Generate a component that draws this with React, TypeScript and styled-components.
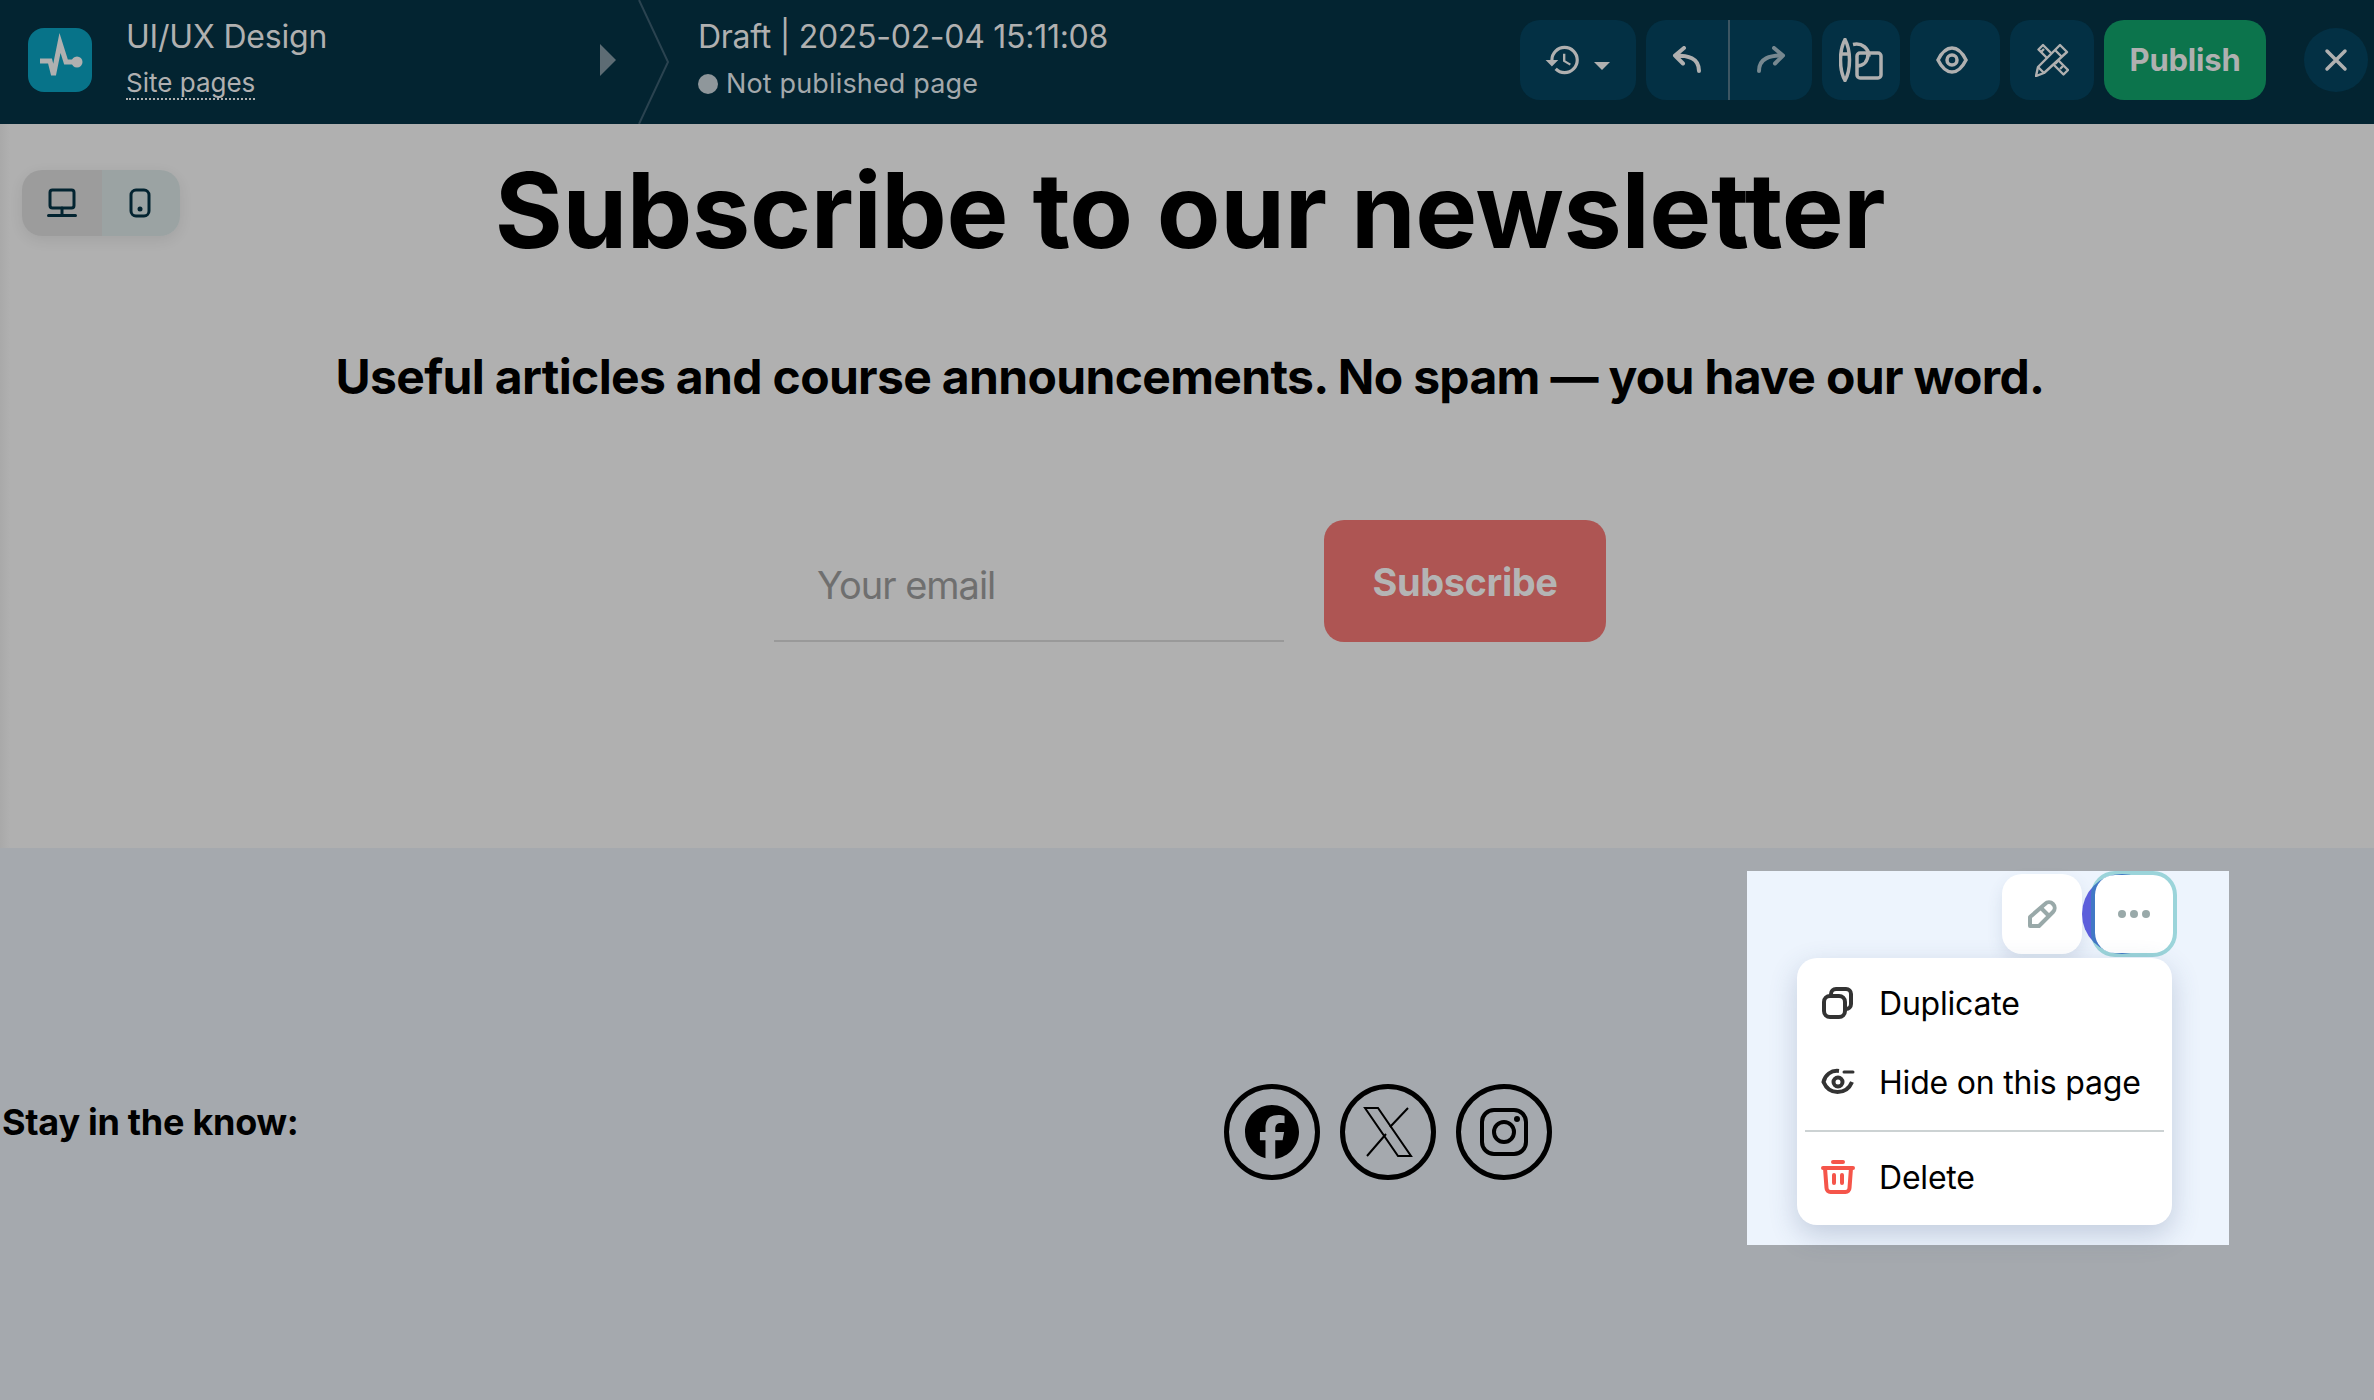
import React from 'react';
import styled, { createGlobalStyle } from 'styled-components';
import { FaFacebook } from 'react-icons/fa6';

const GlobalStyle = createGlobalStyle`
  html, body {
    margin: 0;
    padding: 0;
    background: #a5a9ae;
    font-family: Inter, "Liberation Sans", sans-serif;
  }
  * { box-sizing: border-box; }
`;

const Page = styled.div`
  position: relative;
  width: 2374px;
  height: 1400px;
  overflow: hidden;
  display: flex;
  flex-direction: column;
`;

const TopBar = styled.header`
  height: 124px;
  flex: none;
  padding-bottom: 4px;
  background: #032431;
  display: flex;
  align-items: center;
  color: #b0b0b0;
`;

const SiteBlock = styled.div`
  width: 600px;
  padding-left: 28px;
  display: flex;
  align-items: center;
  gap: 34px;
`;

const LogoBox = styled.div`
  width: 64px;
  height: 64px;
  border-radius: 16px;
  background: #077389;
  display: flex;
`;

const SiteText = styled.div`
  margin-top: -3px;
  display: flex;
  flex-direction: column;
  gap: 11px;
`;

const SiteTitle = styled.div`
  font-size: 32px;
  line-height: 38px;
  letter-spacing: -0.2px;
`;

const SiteLink = styled.span`
  align-self: flex-start;
  font-size: 26px;
  line-height: 31px;
  border-bottom: 2px dotted #b0b0b0;
`;

const Caret = styled.svg`
  width: 18px;
  height: 32px;
  flex: none;
`;

const Chevron = styled.svg`
  width: 32px;
  height: 124px;
  flex: none;
  align-self: flex-start;
  margin-left: 20px;
`;

const DraftBlock = styled.div`
  flex: 1;
  margin: -3px 0 0 28px;
  display: flex;
  flex-direction: column;
  gap: 12px;
`;

const DraftTitle = styled.div`
  font-size: 32px;
  line-height: 38px;
  letter-spacing: -0.28px;
`;

const DraftStatus = styled.div`
  display: flex;
  align-items: center;
  gap: 8px;
  font-size: 27px;
  line-height: 32px;
  letter-spacing: 0.15px;
  color: #a3a9ac;
`;

const StatusDot = styled.span`
  width: 20px;
  height: 20px;
  border-radius: 50%;
  background: #8f979b;
`;

const Tools = styled.div`
  display: flex;
  align-items: center;
  gap: 10px;
`;

const ToolButton = styled.div<{ $w: number; $pr?: number }>`
  width: ${p => p.$w}px;
  height: 80px;
  padding-right: ${p => p.$pr ?? 0}px;
  border-radius: 20px;
  background: #033044;
  display: flex;
  align-items: center;
  justify-content: center;
`;

const HistoryCaret = styled.svg`
  width: 16px;
  height: 8px;
  margin: 12px 0 0 12px;
`;

const UndoGroup = styled.div`
  width: 166px;
  height: 80px;
  border-radius: 20px;
  background: #033044;
  display: flex;
`;

const UndoCell = styled.div<{ $split?: boolean }>`
  flex: 1;
  display: flex;
  align-items: center;
  justify-content: center;
  border-right: ${p => (p.$split ? '2px solid #3c5663' : 'none')};
`;

const Publish = styled.div`
  width: 162px;
  height: 80px;
  padding-bottom: 2px;
  border-radius: 20px;
  background: #0c744c;
  color: #b0b0b0;
  font-size: 31px;
  font-weight: 700;
  letter-spacing: -0.2px;
  display: flex;
  align-items: center;
  justify-content: center;
`;

const CloseButton = styled.div`
  width: 64px;
  height: 64px;
  border-radius: 50%;
  margin-left: 38px;
  margin-right: 6px;
  background: #033044;
  display: flex;
  align-items: center;
  justify-content: center;
`;

const Newsletter = styled.section`
  height: 724px;
  flex: none;
  background: linear-gradient(90deg, #a9a9a9 0, #b0b0b0 10px);
  color: #000;
  padding: 18px 0 0 6px;
  display: flex;
  flex-direction: column;
  align-items: center;
`;

const Heading = styled.h1`
  margin: 0;
  font-size: 104px;
  line-height: 136px;
  font-weight: 700;
  letter-spacing: -0.35px;
`;

const Subheading = styled.h2`
  margin: 69px 0 0;
  font-size: 48px;
  line-height: 60px;
  font-weight: 700;
  letter-spacing: -0.67px;
`;

const Form = styled.div`
  margin-top: 113px;
  display: flex;
  align-items: flex-end;
  gap: 40px;
`;

const EmailField = styled.div`
  width: 510px;
  height: 122px;
  padding: 43px 0 0 43px;
  border-bottom: 2px solid #999;
  font-size: 38px;
  line-height: 44px;
  letter-spacing: -1px;
  color: #6f6f6f;
`;

const SubscribeButton = styled.div`
  width: 282px;
  height: 122px;
  padding-top: 2px;
  border-radius: 20px;
  background: #ae5553;
  color: #b4b4b4;
  font-size: 38px;
  font-weight: 700;
  letter-spacing: -0.4px;
  display: flex;
  align-items: center;
  justify-content: center;
`;

const DeviceToggle = styled.div`
  position: absolute;
  left: 22px;
  top: 170px;
  width: 158px;
  height: 66px;
  border-radius: 20px;
  overflow: hidden;
  display: flex;
  box-shadow: 0 4px 14px rgba(0, 0, 0, 0.08);
`;

const DeviceCell = styled.div<{ $active?: boolean }>`
  width: ${p => (p.$active ? 80 : 78)}px;
  padding-right: ${p => (p.$active ? 0 : 3)}px;
  background: ${p => (p.$active ? '#9c9c9c' : '#9ba3a3')};
  display: flex;
  align-items: center;
  justify-content: center;
`;

const Footer = styled.footer`
  flex: 1;
  background: #a5a9ae;
  padding-top: 236px;
  display: flex;
  align-items: flex-start;
  color: #000;
`;

const FooterLabel = styled.div`
  width: 1224px;
  padding: 16px 0 0 2px;
  font-size: 36px;
  line-height: 44px;
  font-weight: 700;
  letter-spacing: -0.28px;
`;

const Socials = styled.div`
  display: flex;
  gap: 20px;
`;

const SocialLink = styled.div`
  width: 96px;
  height: 96px;
  border: 5px solid #000;
  border-radius: 50%;
  display: flex;
  align-items: center;
  justify-content: center;
`;

const EditPanel = styled.div`
  position: absolute;
  left: 1747px;
  top: 871px;
  width: 482px;
  height: 374px;
  background: #edf4fd;
`;

const PencilButton = styled.div`
  position: absolute;
  left: 255px;
  top: 3px;
  width: 80px;
  height: 80px;
  border-radius: 20px;
  background: #fff;
  box-shadow: 0 8px 16px rgba(60, 80, 120, 0.12);
  display: flex;
  align-items: center;
  justify-content: center;
`;

const BlueDisc = styled.div`
  position: absolute;
  left: 335px;
  top: 3px;
  width: 80px;
  height: 80px;
  border-radius: 50%;
  background: #5d5fdb;
`;

const MoreButton = styled.div`
  position: absolute;
  left: 344px;
  top: 0;
  width: 86px;
  height: 86px;
  border-radius: 24px;
  border: 4px solid rgba(20, 160, 160, 0.38);
  background: #fff;
  background-clip: padding-box;
  display: flex;
  align-items: center;
  justify-content: center;
`;

const Menu = styled.div`
  position: absolute;
  left: 50px;
  top: 87px;
  width: 375px;
  height: 267px;
  border-radius: 20px;
  background: #fff;
  box-shadow: 0 10px 28px rgba(60, 80, 120, 0.24);
  padding: 8px 8px 0;
  display: flex;
  flex-direction: column;
`;

const MenuItem = styled.div<{ $h: number }>`
  height: ${p => p.$h}px;
  padding-left: 16px;
  display: flex;
  align-items: center;
  gap: 24px;
  color: #000;
  font-size: 32px;
  letter-spacing: -0.2px;
`;

const MenuDivider = styled.div`
  height: 2px;
  margin-top: 6px;
  background: #ccd2d3;
`;

const IconSlot = styled.svg`
  width: 34px;
  height: 34px;
  flex: none;
`;

const App = () => {
  return (
    <Page>
      <GlobalStyle />
      <TopBar>
        <SiteBlock>
          <LogoBox>
            <svg width="64" height="64" viewBox="0 0 64 64" fill="none">
              <path d="M12 33h10l3.500 14L32 15l6 19h10" stroke="#b0b0b0" strokeWidth="5" />
              <circle cx="49" cy="34" r="5.500" fill="#b0b0b0" />
            </svg>
          </LogoBox>
          <SiteText>
            <SiteTitle>UI/UX Design</SiteTitle>
            <SiteLink>Site pages</SiteLink>
          </SiteText>
        </SiteBlock>
        <Caret viewBox="0 0 18 32">
          <path d="M0 0l16 16L0 32z" fill="#5d6c74" />
        </Caret>
        <Chevron viewBox="0 0 32 124" fill="none">
          <path d="M1 0l29 62L1 124" stroke="#2a4350" strokeWidth="2" />
        </Chevron>
        <DraftBlock>
          <DraftTitle>Draft | 2025-02-04 15:11:08</DraftTitle>
          <DraftStatus>
            <StatusDot />
            Not published page
          </DraftStatus>
        </DraftBlock>
        <Tools>
          <ToolButton $w={116} $pr={2}>
            <svg width="38" height="38" viewBox="0 0 24 24">
              <path
                fill="#b0b0b0"
                d="M13 3a9 9 0 0 0-9 9H1l3.890 3.890.07.14L9 12H6c0-3.870 3.130-7 7-7s7 3.130 7 7-3.130 7-7 7c-1.930 0-3.680-.79-4.940-2.060l-1.420 1.420A8.954 8.954 0 0 0 13 21a9 9 0 0 0 0-18zm-1 5v5l4.280 2.540.72-1.210-3.500-2.080V8H12z"
              />
            </svg>
            <HistoryCaret viewBox="0 0 16 8">
              <path d="M0 0h16L8 8z" fill="#b0b0b0" />
            </HistoryCaret>
          </ToolButton>
          <UndoGroup>
            <UndoCell $split>
              <svg width="30" height="28" viewBox="0 0 30 28" fill="none">
                <path d="M12 2L3 9.500l8 8M3 9.500c13 0 24 2 24 15.500" stroke="#b0b0b0" strokeWidth="4" strokeLinecap="round" strokeLinejoin="round" />
              </svg>
            </UndoCell>
            <UndoCell>
              <svg width="30" height="28" viewBox="0 0 30 28" fill="none">
                <path d="M18 2l9 7.500-8 8M27 9.500C14 9.500 3 12 3 25" stroke="#778890" strokeWidth="4" strokeLinecap="round" strokeLinejoin="round" />
              </svg>
            </UndoCell>
          </UndoGroup>
          <ToolButton $w={78}>
            <svg width="44" height="44" viewBox="0 0 44 44" fill="none" stroke="#b0b0b0" strokeWidth="3.500">
              <path d="M6 1.500C2.500 8 1.500 13 1.500 22c0 9 2 16 4.500 20.500C8.500 38 10.500 31 10.500 22c0-9-1-14-4.500-20.500z" />
              <path d="M1.500 16h9" />
              <path d="M14 6.500c9-2 16 4 16 12" />
              <path d="M17.500 28C25 28 29 23 29 16" />
              <rect x="18" y="15" width="24" height="25" rx="3" />
            </svg>
          </ToolButton>
          <ToolButton $w={90} $pr={7}>
            <svg width="32" height="28" viewBox="0 0 32 28" fill="none" stroke="#b0b0b0">
              <path d="M2 14C6 6 11 2 16 2s10 4 14 12c-4 8-9 12-14 12S6 22 2 14z" strokeWidth="3.500" />
              <circle cx="16" cy="14" r="5" strokeWidth="3.500" />
            </svg>
          </ToolButton>
          <ToolButton $w={84}>
            <svg width="34" height="34" viewBox="0 0 34 34" fill="none" stroke="#b0b0b0" strokeWidth="2.400" strokeLinejoin="round">
              <path d="M8 2l25 25-4.500 4.500L3.500 6.500z" />
              <path d="M25 2l7 7L9 30l-8 3 2-9z" fill="#033044" />
              <path d="M20 7l7 7M3 24l6 6" />
              <path d="M20 21l3-3M25 26l3-3M6 9l3-3" />
            </svg>
          </ToolButton>
          <Publish>Publish</Publish>
        </Tools>
        <CloseButton>
          <svg width="24" height="24" viewBox="0 0 24 24" fill="none">
            <path d="M3 3l18 18M21 3L3 21" stroke="#b0b0b0" strokeWidth="3.500" strokeLinecap="round" />
          </svg>
        </CloseButton>
      </TopBar>

      <Newsletter>
        <Heading>Subscribe to our newsletter</Heading>
        <Subheading>Useful articles and course announcements. No spam — you have our word.</Subheading>
        <Form>
          <EmailField>Your email</EmailField>
          <SubscribeButton>Subscribe</SubscribeButton>
        </Form>
      </Newsletter>

      <Footer>
        <FooterLabel>Stay in the know:</FooterLabel>
        <Socials>
          <SocialLink>
            <FaFacebook size={54} color="#000" />
          </SocialLink>
          <SocialLink>
            <svg width="52" height="52" viewBox="0 0 52 52" fill="none" stroke="#000" strokeWidth="2">
              <path d="M3 2h13l33 48H36z" />
              <path d="M46 2L28 21M24 28L5 50" />
            </svg>
          </SocialLink>
          <SocialLink>
            <svg width="50" height="50" viewBox="0 0 50 50" fill="none" stroke="#000" strokeWidth="4">
              <rect x="3" y="3" width="44" height="44" rx="12" />
              <circle cx="25" cy="25" r="10" />
              <circle cx="38" cy="12" r="3" fill="#000" stroke="none" />
            </svg>
          </SocialLink>
        </Socials>
      </Footer>

      <DeviceToggle>
        <DeviceCell $active>
          <svg width="30" height="30" viewBox="0 0 30 30" fill="none" stroke="#032431" strokeWidth="3">
            <rect x="3" y="2" width="24" height="18" rx="2.500" />
            <path d="M15 20v7M1.500 27.500h27" strokeLinecap="round" />
          </svg>
        </DeviceCell>
        <DeviceCell>
          <svg width="22" height="30" viewBox="0 0 22 30" fill="none" stroke="#032431" strokeWidth="3">
            <rect x="2" y="2" width="18" height="26" rx="5" />
            <circle cx="11" cy="21" r="2.500" fill="#032431" stroke="none" />
          </svg>
        </DeviceCell>
      </DeviceToggle>

      <EditPanel>
        <PencilButton>
          <svg width="30" height="30" viewBox="0 0 30 30" fill="none" stroke="#99a9a9" strokeWidth="4" strokeLinejoin="round">
            <path d="M18 5a5.500 5.500 0 0 1 8 8L12 27H3v-9z" />
            <path d="M14 9l7.500 7.500" />
          </svg>
        </PencilButton>
        <BlueDisc />
        <MoreButton>
          <svg width="32" height="8" viewBox="0 0 32 8" fill="#99a9a9">
            <circle cx="4" cy="4" r="4" />
            <circle cx="16" cy="4" r="4" />
            <circle cx="28" cy="4" r="4" />
          </svg>
        </MoreButton>
        <Menu>
          <MenuItem $h={74}>
            <IconSlot viewBox="0 0 34 34" fill="none" stroke="#333" strokeWidth="4">
              <rect x="3" y="10" width="21" height="21" rx="6" />
              <path d="M10 10V8a5 5 0 0 1 5-5h10a5 5 0 0 1 5 5v10a5 5 0 0 1-5 5h-1" />
            </IconSlot>
            Duplicate
          </MenuItem>
          <MenuItem $h={84}>
            <IconSlot viewBox="0 0 34 34" fill="none" stroke="#333" strokeWidth="4">
              <path d="M18 6C10 5 4 10 2.500 17c3 7 8 10 14 10 7 0 12-4 14.500-10" />
              <circle cx="17" cy="17" r="4.500" />
              <path d="M23 7h9" strokeLinecap="round" strokeWidth="3" />
            </IconSlot>
            Hide on this page
          </MenuItem>
          <MenuDivider />
          <MenuItem $h={90}>
            <IconSlot viewBox="0 0 34 34" fill="none" stroke="#f5554a" strokeWidth="4" strokeLinecap="round" strokeLinejoin="round">
              <path d="M2 8h30M12 2h10" />
              <path d="M4 8l1.500 20a4 4 0 0 0 4 4h15a4 4 0 0 0 4-4L30 8" />
              <path d="M13 15v8M21 15v8" />
            </IconSlot>
            Delete
          </MenuItem>
        </Menu>
      </EditPanel>
    </Page>
  );
};

export default App;
